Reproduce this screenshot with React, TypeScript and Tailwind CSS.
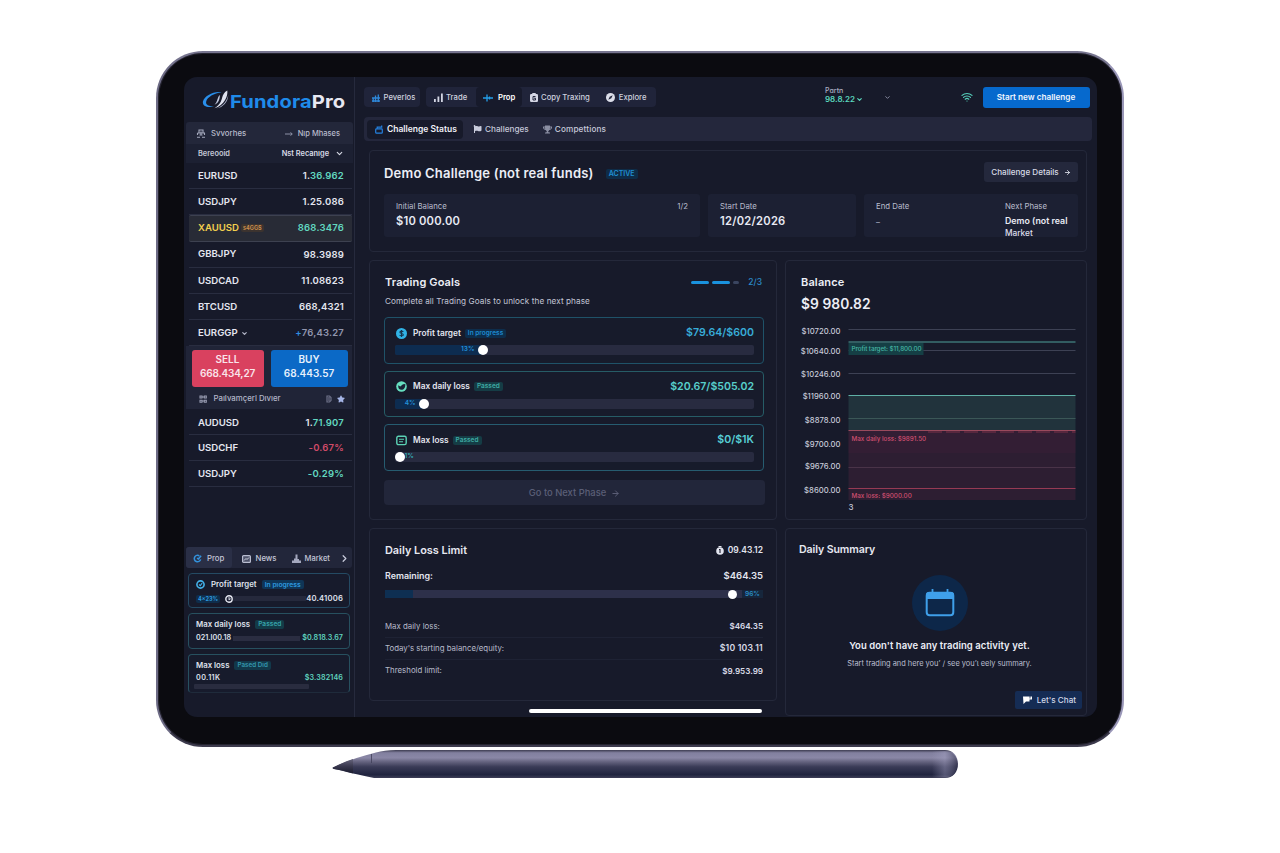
import React from "react";
import { FaFlag, FaTrophy, FaStar } from "react-icons/fa";
import { ChevronDown, ChevronRight, Wifi, ArrowRight } from "lucide-react";

type Tone = "white" | "green" | "red" | "mixed" | "blue" | "gold";

interface Quote {
  symbol: string;
  lead?: string;
  value: string;
  tone: Tone;
}

const toneClass: Record<Tone, string> = {
  white: "text-[#e4e6f0]",
  green: "text-[#62d8c0]",
  red: "text-[#d04a68]",
  mixed: "text-[#62d8c0]",
  blue: "text-[#9296ae]",
  gold: "text-[#62d8c0]",
};

const quotesTop: Quote[] = [
  { symbol: "EURUSD", lead: "1.", value: "36.962", tone: "mixed" },
  { symbol: "USDJPY", value: "1.25.086", tone: "white" },
  { symbol: "XAUUSD", value: "868.3476", tone: "gold" },
  { symbol: "GBBJPY", value: "98.3989", tone: "white" },
  { symbol: "USDCAD", value: "11.08623", tone: "white" },
  { symbol: "BTCUSD", value: "668,4321", tone: "white" },
  { symbol: "EURGGP", lead: "+", value: "76,43.27", tone: "blue" },
];

const quotesBottom: Quote[] = [
  { symbol: "AUDUSD", lead: "1.", value: "71.907", tone: "mixed" },
  { symbol: "USDCHF", value: "-0.67%", tone: "red" },
  { symbol: "USDJPY", value: "-0.29%", tone: "green" },
];

function QuoteRow({ q, compact = false }: { q: Quote; compact?: boolean }) {
  const gold = q.tone === "gold";
  return (
    <div
      className={
        gold
          ? "flex h-[26.2px] items-center justify-between rounded-[2px] border-y border-[#3d4150] bg-[#282b36] pr-[8px] pl-[9px]"
          : compact
            ? "flex h-[25.8px] items-center justify-between border-b border-[#292d40] pt-[2px] pr-[8px] pl-[9px]"
            : "flex h-[26.2px] items-center justify-between border-b border-[#292d40] pt-[1px] pr-[8px] pl-[9px]"
      }
    >
      <div className="flex items-center">
        <span className={gold ? "text-[9.6px] font-semibold text-[#f3cf4e]" : "text-[9.6px] font-semibold text-[#e4e6f0]"}>
          {q.symbol}
        </span>
        {gold && (
          <span className="ml-[2px] rounded-[2px] bg-[#3c332f] px-[2px] text-[5.5px] leading-[8px] font-bold text-[#c98d4c]">s4GGS</span>
        )}
        {q.symbol === "EURGGP" && <ChevronDown className="ml-[3px] h-[7px] w-[7px] text-[#b4b7c9]" strokeWidth={4} />}
      </div>
      <span className={"text-[9.5px] font-semibold tracking-[0.2px] " + toneClass[q.tone]}>
        {q.lead && <span className={q.lead === "+" ? "text-[#2f8de0]" : "text-[#e4e6f0]"}>{q.lead}</span>}
        {q.value}
      </span>
    </div>
  );
}

function Logo() {
  return (
    <div className="flex h-[45px] items-center pt-[3px] pl-[18px]">
      <svg className="-mt-[2px] h-[20px] w-[27px] shrink-0" viewBox="0 0 27 20">
        <path
          d="M19.500 2.300C12 .9 2.200 5.800.9 11.800.2 16.500 6.500 18.300 12 16.300 7 16.300 3.300 14.800 4.200 11.400 5.300 7.200 12 3.300 19.500 2.300Z"
          fill="#2a8fea"
        />
        <path d="M25.300.5c.8 5.500-2.800 14.900-12.800 17.800 5.200-3.500 6.600-6.700 7.600-10.600C20.900 4.700 22.500 2 25.300.5Z" fill="#dfe2ef" />
        <path d="M26.200 4.800c-.7 5-4.500 11-11.200 13.700 5.500-1 11.500-6.500 11.200-13.700Z" fill="#aab0c8" />
        <path d="M17.800 5c-2.300 1.800-2.100 6.500-5.300 9.800 3.800-1.600 5.500-5.500 5.300-9.800Z" fill="#c3cadf" />
      </svg>
      <span className="ml-[1px] inline-block origin-left scale-x-[1.120] text-[18px] font-bold tracking-[0.1px] text-[#e7e8f2]">
        <span className="text-[#1f8bea]">Fundora</span>Pro
      </span>
    </div>
  );
}

function SideTabs() {
  return (
    <div className="mx-[2px] flex h-[21px] shrink-0 items-center rounded-[3px] bg-[#22263a] pt-[2px] text-[7.8px] font-medium text-[#c4c7d8]">
      <div className="-mt-[2px] flex h-[21px] w-[46px] items-center rounded-[3px] bg-[#2a2f46] pt-[2px] pl-[7px]">
        <svg className="h-[9px] w-[9px]" viewBox="0 0 10 10" fill="none" stroke="#3392dc" strokeWidth="1.700">
          <path d="M8.500 6A3.600 3.600 0 1 1 7 2M4.500 4.500 6 5.500l3-3.500" />
        </svg>
        <span className="ml-[5px]">Prop</span>
      </div>
      <svg className="ml-[10px] h-[8px] w-[9px]" viewBox="0 0 9 8">
        <rect x=".6" y=".6" width="7.800" height="6.800" rx="1" fill="#4e536a" stroke="#b9bdd0" strokeWidth="1.200" />
        <path d="M2 5.500 4 3.500l1 1 2-2" stroke="#dfe2ee" fill="none" strokeWidth=".9" />
      </svg>
      <span className="ml-[4.500px]">News</span>
      <svg className="ml-[15px] h-[9px] w-[9px]" viewBox="0 0 9 9" fill="#a4a8be">
        <path d="M0 9V6.500h2V4.500h1.500V.5h2V5H7v1.500h2V9Z" />
      </svg>
      <span className="ml-[4px] text-[7.600px]">Market</span>
      <ChevronRight className="ml-auto mr-[2px] h-[11px] w-[11px] text-[#c9ccdc]" strokeWidth={2.600} />
    </div>
  );
}

function Sidebar() {
  return (
    <aside className="flex w-[171px] shrink-0 flex-col border-r border-[#262a3d]">
      <Logo />
      <div className="mr-[1px] ml-[2px] flex h-[22px] shrink-0 items-center rounded-t-[3px] bg-[#23273a] pt-px text-[7.800px] font-medium text-[#b9bccd]">
        <svg className="ml-[10px] h-[9px] w-[10px]" viewBox="0 0 10 9" fill="none" stroke="#a5a9bd" strokeWidth="1.100">
          <path d="M3 4V1h4v3M1.500 4h7v2M1.500 4v2M3.500 6h3M1 8.300h3M6 8.300h3M5 2.500v3" />
        </svg>
        <span className="ml-[5px]">Svvorhes</span>
        <svg className="ml-auto h-[4px] w-[8px]" viewBox="0 0 8 4" fill="none" stroke="#8d91a6" strokeWidth="1">
          <path d="M0 2h7M5.500.5 7.300 2 5.500 3.500" />
        </svg>
        <span className="mr-[13px] ml-[5px] text-[7.500px]">Nıp Mhases</span>
      </div>
      <div className="mr-[1px] ml-[2px] flex h-[19px] shrink-0 items-center justify-between bg-[#1c2032] pr-[9px] pl-[12px] text-[7.400px] font-semibold text-[#c3c6d6]">
        <span>Bereooid</span>
        <span className="flex items-center text-[#d8dae6]">
          Nst Recanıge
          <ChevronDown className="ml-[6px] h-[9px] w-[9px]" strokeWidth={3} />
        </span>
      </div>
      <div className="mr-[2px] ml-[5px] flex flex-col">
        {quotesTop.map((q, i) => (
          <QuoteRow key={i} q={q} />
        ))}
      </div>
      <div className="mx-[2px] flex h-[63px] shrink-0 flex-col bg-[#202437] pt-[3.500px] pr-[4px] pl-[5.500px]">
        <div className="flex gap-[7px]">
          <div className="flex h-[37px] w-[72px] flex-col items-center justify-center gap-[3px] rounded-[3px] bg-[#d9415f] pb-[3px] text-[10px] leading-[11px] font-semibold text-[#f9e4ea]">
            <span>SELL</span>
            <span className="tracking-[-0.15px]">668.434,27</span>
          </div>
          <div className="flex h-[37px] w-[77px] flex-col items-center justify-center gap-[3px] rounded-[3px] bg-[#0b69c6] pb-[3px] text-[10px] leading-[11px] font-semibold text-[#e6f0fc]">
            <span>BUY</span>
            <span>68.443.57</span>
          </div>
        </div>
        <div className="flex h-[23px] items-center pt-[2px] text-[7.800px] font-medium text-[#b4b7ca]">
          <svg className="ml-[7px] h-[8px] w-[8px]" viewBox="0 0 8 8" fill="none" stroke="#989cb2" strokeWidth="1.100">
            <path d="M1 1h2v2H1zM5.300 1h2v2h-2zM1 5.200h2v2H1zM5.300 5.200h2v2h-2zM3 2h2M3 6h2" />
          </svg>
          <span className="ml-[7px]">Paılvamçerl Dıvıer</span>
          <svg className="ml-auto h-[8px] w-[6px]" viewBox="0 0 6 8" fill="none" stroke="#6d7188" strokeWidth="1.200">
            <path d="M1 1h2.500L5 2.500v3L3.500 7H1zM3 2v4" />
          </svg>
          <FaStar className="mr-[3px] ml-[5px] h-[8px] w-[8px] text-[#a5b5e6]" />
        </div>
      </div>
      <div className="mr-[2px] ml-[5px] flex flex-col">
        {quotesBottom.map((q, i) => (
          <QuoteRow key={i} q={q} compact />
        ))}
      </div>
      <div className="flex-1" />
      <SideTabs />
      <div className="flex h-[149px] shrink-0 flex-col gap-[5px] pt-[5px] pr-[4px] pl-[4px] text-[7.800px] font-semibold text-[#dfe1ec]">
        <div className="flex h-[35px] flex-col rounded-[4px] border border-[#244a63] bg-[#171b2c] px-[7px] pt-[4px]">
          <div className="flex h-[12px] items-center pt-px">
            <svg className="h-[9px] w-[9px]" viewBox="0 0 9 9" fill="none" stroke="#43b2ea" strokeWidth="1.600">
              <circle cx="4.500" cy="4.500" r="3.600" />
              <path d="M3 4.500 4.300 5.600 6.200 3" strokeWidth="1.100" />
            </svg>
            <span className="ml-[6px] tracking-[0.05px]">Profit target</span>
            <span className="ml-[5px] rounded-[2px] bg-[#0f3557] px-[3px] text-[6.800px] leading-[9px] text-[#2d98de]">In pıogress</span>
          </div>
          <div className="flex h-[19px] items-center">
            <span className="rounded-[2px] bg-[#0f2d4b] px-[2px] text-[5.500px] leading-[8px] font-bold text-[#2d98de]">4x23%</span>
            <svg className="ml-[5px] h-[8px] w-[8px]" viewBox="0 0 8 8">
              <circle cx="4" cy="4" r="3.200" fill="#22263a" stroke="#e6e8f1" strokeWidth="1.400" />
              <path d="M3 3h2v1.500H3.500" fill="none" stroke="#e6e8f1" strokeWidth=".8" />
            </svg>
            <span className="h-[5px] flex-1 bg-[#25293c]" />
            <span className="-mr-[1px] text-[7.700px] tracking-[0.15px]">40.41006</span>
          </div>
        </div>
        <div className="flex h-[36px] flex-col rounded-[4px] border border-[#27505f] bg-[#171b2c] px-[7px] pt-[4px]">
          <div className="flex h-[12px] items-center pt-px">
            <span className="tracking-[0.05px]">Max daily loss</span>
            <span className="ml-[5px] rounded-[2px] bg-[#133b48] px-[3px] text-[6.600px] leading-[9px] text-[#36a2a8]">Passed</span>
          </div>
          <div className="flex h-[16px] items-center">
            <span className="text-[7.200px]">021.I00.18</span>
            <span className="ml-[2px] h-[5px] flex-1 bg-[#2a2d41]" />
            <span className="-mr-[1px] ml-[2px] text-[7.200px] text-[#5fd3bf]">$0.818.3.67</span>
          </div>
        </div>
        <div className="flex h-[39px] flex-col rounded-[4px] border border-b-[#1f2b3b] border-[#27505f] bg-[#171b2c] px-[7px] pt-[4px]">
          <div className="flex h-[13px] items-center">
            <span>Max loss</span>
            <span className="ml-[5px] rounded-[2px] bg-[#12384a] px-[3px] text-[6.300px] leading-[9px] text-[#3495ac]">Pased Dıd</span>
          </div>
          <div className="flex h-[12px] items-center justify-between">
            <span className="text-[7.200px] tracking-[0.4px]">00.11K</span>
            <span className="-mr-[1px] text-[7.200px] tracking-[0.1px] text-[#5fd3bf]">$3.382146</span>
          </div>
          <div className="-ml-[2px] h-[5px] w-[115px] shrink-0 rounded-[1px] bg-[#292c3f]" />
        </div>
      </div>
    </aside>
  );
}

function TopNav() {
  return (
    <div className="flex h-[40px] items-center pl-[9px] text-[7.700px] font-medium text-[#ced1df]">
      <div className="flex h-[20px] w-[56px] items-center rounded-[4px] bg-[#20243a] pt-px pl-[8px]">
        <svg className="h-[8px] w-[8px]" viewBox="0 0 8 8" fill="none" stroke="#2e87d8" strokeWidth="1.300">
          <path d="M1.200 8V4M3.500 8V1.500M6.300 8V.5M0 4h8M0 7h8" />
        </svg>
        <span className="ml-[3.500px]">Peverlos</span>
      </div>
      <div className="ml-[6px] flex h-[20px] w-[230px] items-center rounded-[4px] bg-[#20243a] pt-px">
        <div className="flex w-[50px] items-center pl-[7.500px]">
          <svg className="h-[9px] w-[9px]" viewBox="0 0 9 9" fill="#d4d6e4">
            <path d="M0 6h1.800v3H0zM3.500 3.500h1.800V9H3.500zM7 .5h1.800V9H7z" />
          </svg>
          <span className="ml-[3.500px]">Trade</span>
        </div>
        <div className="-mt-px flex h-[20px] w-[46px] items-center rounded-[4px] bg-[#171a2b] pt-px pl-[7px] font-semibold text-white">
          <svg className="h-[8px] w-[10px]" viewBox="0 0 10 8" fill="none" stroke="#249ee8" strokeWidth="1.300">
            <path d="M0 4h10M4 .5v7M6.500 2.500v3" />
          </svg>
          <span className="ml-[5px]">Prop</span>
        </div>
        <svg className="-mt-px ml-[8px] h-[9px] w-[8px]" viewBox="0 0 8 9">
          <rect x="0" y="1" width="8" height="8" rx="1.300" fill="#d4d6e4" />
          <rect x="2.200" y="0" width="3.600" height="2" rx=".6" fill="#d4d6e4" />
          <path d="M5.500 3.500H3v3.500h2.500V5.200H4" stroke="#23273c" fill="none" strokeWidth="1" />
        </svg>
        <span className="ml-[3px]">Copy Traxing</span>
        <svg className="-mt-px ml-[16px] h-[9px] w-[9px]" viewBox="0 0 9 9">
          <circle cx="4.500" cy="4.500" r="4.500" fill="#dcdee9" />
          <path d="M6.700 2.300 5.300 5.300 2.300 6.700 3.700 3.700Z" fill="#23273c" />
        </svg>
        <span className="ml-[4px]">Explore</span>
      </div>
      <div className="ml-[169px] flex w-[46px] flex-col pb-[5px] leading-[9px]">
        <span className="text-[7px] text-[#aeb1c4]">Pɑrtn</span>
        <span className="flex items-center text-[8px] font-semibold text-[#5ad6bd]">
          98.8.22
          <ChevronDown className="ml-[1px] h-[7px] w-[7px]" strokeWidth={4} />
        </span>
      </div>
      <ChevronDown className="ml-[13px] h-[7px] w-[7px] text-[#9296ab]" strokeWidth={3} />
      <Wifi className="ml-[70px] h-[12px] w-[12px] text-[#54cdb9]" strokeWidth={2.400} />
      <div className="ml-[9.500px] flex h-[21px] w-[107px] items-center justify-center rounded-[3px] bg-[#0669cd] text-[8.200px] font-semibold text-[#f0f5fd]">
        Start new challenge
      </div>
    </div>
  );
}

function SubNav() {
  return (
    <div className="mr-[5px] ml-[9px] flex h-[24px] items-center rounded-[4px] bg-[#24273c] text-[8.200px] font-medium text-[#c6c9d9]">
      <div className="ml-[3px] flex h-[19px] w-[96px] items-center rounded-[4px] bg-[#171a2a] pl-[8px] text-[8.500px] font-semibold text-[#f0f1f7]">
        <svg className="h-[9px] w-[8px]" viewBox="0 0 8 9" fill="none" stroke="#2481e0" strokeWidth="1.200">
          <rect x=".7" y="3.900" width="6.600" height="4.300" rx=".8" />
          <path d="M2.200 3.800V2.200h4.500V.6" />
        </svg>
        <span className="ml-[4px]">Challenge Status</span>
      </div>
      <FaFlag className="ml-[10px] h-[8px] w-[9px] text-[#c9ccdc]" />
      <span className="ml-[3px]">Challenges</span>
      <FaTrophy className="ml-[14px] h-[9px] w-[9px] text-[#8b8fa3]" />
      <span className="ml-[3px] tracking-[0.15px]">Compettions</span>
    </div>
  );
}

function HeaderCard() {
  return (
    <section className="flex h-[102px] flex-col rounded-[4px] border border-[#24283a] pt-[11px] pr-[8px] pl-[14px]">
      <div className="flex h-[20px] items-center">
        <h1 className="pt-[4px] text-[13px] font-semibold tracking-[0.21px] text-[#eceef6]">Demo Challenge (not real funds)</h1>
        <span className="mt-[4px] ml-[12px] rounded-[2px] bg-[#0e2c48] px-[3px] text-[7px] leading-[10px] font-semibold text-[#2090d2]">ACTIVE</span>
        <div className="ml-auto flex h-[20px] w-[94px] items-center justify-center gap-[5px] rounded-[3px] bg-[#24283c] text-[8.100px] font-medium text-[#d9dbe7]">
          Challenge Details
          <ArrowRight className="h-[7px] w-[7px]" strokeWidth={3} />
        </div>
      </div>
      <div className="mt-[12px] flex h-[43px] gap-[8px] text-[7.800px] leading-[11px] text-[#b9bccd]">
        <div className="flex w-[316px] justify-between rounded-[3px] bg-[#1c2033] px-[12px] pt-[7px]">
          <div className="flex flex-col gap-[3px]">
            <span>Initial Balance</span>
            <span className="text-[11.200px] leading-[13px] font-semibold tracking-[0.2px] text-[#e8eaf3]">$10 000.00</span>
          </div>
          <span>1/2</span>
        </div>
        <div className="flex w-[148px] flex-col gap-[3px] rounded-[3px] bg-[#1c2033] pt-[7px] pl-[12px]">
          <span>Start Date</span>
          <span className="text-[11.200px] leading-[13px] font-semibold tracking-[0.25px] text-[#e8eaf3]">12/02/2026</span>
        </div>
        <div className="flex flex-1 justify-between rounded-[3px] bg-[#1c2033] pt-[7px] pr-[9px] pl-[12px]">
          <div className="flex flex-col gap-[3px]">
            <span>End Date</span>
            <span className="pt-[2px]">–</span>
          </div>
          <div className="flex w-[64px] flex-col whitespace-nowrap">
            <span>Next Phase</span>
            <span className="pt-[2px] text-[8.800px] leading-[13px] font-semibold text-[#e8eaf3]">Demo (not real</span>
            <span className="text-[8.300px] leading-[12px] font-medium text-[#dcdeea]">Market</span>
          </div>
        </div>
      </div>
    </section>
  );
}

interface Goal {
  title: string;
  badge: string;
  badgeClass: string;
  amount: string;
  amountClass: string;
  percent: string;
  fill: number;
  border: string;
  icon: React.ReactNode;
}

const goals: Goal[] = [
  {
    title: "Profit target",
    badge: "In progress",
    badgeClass: "bg-[#0d2d4c] text-[#1d8bd0]",
    amount: "$79.64/$600",
    amountClass: "text-[#38acd8]",
    percent: "13%",
    fill: 88,
    border: "border-[#1f5268]",
    icon: (
      <svg className="h-[11px] w-[11px]" viewBox="0 0 11 11">
        <circle cx="5.500" cy="5.500" r="5.500" fill="#31b3e6" />
        <path d="M7.300 3.800c-.8-1-3.400-.9-3.400.4 0 1.600 3.400.9 3.400 2.500 0 1.400-2.800 1.500-3.700.3M5.500 2v7" stroke="#16354e" strokeWidth="1.100" fill="none" />
      </svg>
    ),
  },
  {
    title: "Max daily loss",
    badge: "Passed",
    badgeClass: "bg-[#153c45] text-[#3eaaa3]",
    amount: "$20.67/$505.02",
    amountClass: "text-[#57cfcb]",
    percent: "4%",
    fill: 29,
    border: "border-[#265c66]",
    icon: (
      <svg className="h-[11px] w-[11px]" viewBox="0 0 11 11">
        <circle cx="5.500" cy="5.500" r="5.300" fill="#66dfc0" />
        <path d="M2.200 4.300 4.300 5.500 7 3.300 9.300 3c.3 3.800-1.500 5.800-3.800 5.800S2 7.500 2.200 4.300Z" fill="#192436" />
      </svg>
    ),
  },
  {
    title: "Max loss",
    badge: "Passed",
    badgeClass: "bg-[#153c45] text-[#3eaaa3]",
    amount: "$0/$1K",
    amountClass: "text-[#57cfd6]",
    percent: "1%",
    fill: 5,
    border: "border-[#265c70]",
    icon: (
      <svg className="h-[11px] w-[11px]" viewBox="0 0 11 11" fill="none" stroke="#5bd2b5" strokeWidth="1.400">
        <rect x=".8" y="1.300" width="9.400" height="8.300" rx="1.600" />
        <path d="M3 4.300h5M3 6.700h4" strokeWidth="1.100" />
      </svg>
    ),
  },
];

function GoalCard({ g }: { g: Goal }) {
  const atStart = g.fill <= 10;
  return (
    <div className={"flex h-[46.500px] flex-col rounded-[4px] border bg-[#171b2b] pr-[9px] pl-[9.500px] " + g.border}>
      <div className="flex h-[30px] shrink-0 items-center">
        <span className="ml-[1.500px]">{g.icon}</span>
        <span className="ml-[6px] text-[8.300px] font-semibold text-[#e3e5ef]">{g.title}</span>
        <span className={"ml-[4px] rounded-[2px] px-[3px] text-[6.500px] leading-[9px] font-semibold " + g.badgeClass}>{g.badge}</span>
        <span className={"ml-auto text-[10.600px] font-semibold " + g.amountClass}>{g.amount}</span>
      </div>
      <div className="-mt-[3px] flex h-[10px] shrink-0 items-center rounded-[2px] bg-[#282b40]">
        <div
          className={
            atStart
              ? "h-[10px] shrink-0"
              : "flex h-[10px] shrink-0 items-center justify-end rounded-l-[2px] bg-[#0d2c50] pr-[8px] text-[6.500px] font-semibold text-[#2390d8]"
          }
          style={{ width: g.fill }}
        >
          {!atStart && g.percent}
        </div>
        <div className="-mx-[5px] h-[10px] w-[10px] shrink-0 rounded-full bg-white" />
        {atStart && <span className="ml-[5px] text-[6.500px] font-semibold text-[#35adb8]">{g.percent}</span>}
      </div>
    </div>
  );
}

function TradingGoals() {
  return (
    <section className="flex h-[260px] w-[408px] flex-col rounded-[4px] border border-[#24283a] pr-[12px] pl-[14px]">
      <div className="flex h-[26px] items-end pl-[1px]">
        <h2 className="flex-1 text-[11px] leading-[9px] font-semibold tracking-[0.12px] text-[#eceef6]">Trading Goals</h2>
        <div className="flex items-center gap-[3px] pr-[2px] text-[8.500px] leading-[9px] font-medium text-[#2b8bc9]">
          <span className="h-[3px] w-[18px] rounded-full bg-[#1a92de]" />
          <span className="h-[3px] w-[18px] rounded-full bg-[#1a92de]" />
          <span className="h-[3px] w-[6px] rounded-full bg-[#3a4560]" />
          <span className="ml-[6px]">2/3</span>
        </div>
      </div>
      <p className="mt-[8px] pl-[1px] text-[8.200px] leading-[12px] tracking-[0.07px] text-[#c2c5d5]">
        Complete all Trading Goals to unlock the next phase
      </p>
      <div className="mt-[10px] flex flex-col gap-[7px]">
        {goals.map((g) => (
          <GoalCard key={g.title} g={g} />
        ))}
      </div>
      <div className="mt-[9.500px] -mr-[1px] flex h-[25px] shrink-0 items-center justify-center gap-[5px] rounded-[4px] bg-[#22263a] pt-px text-[9.400px] font-medium text-[#5b5f77]">
        Go to Next Phase
        <ArrowRight className="h-[9px] w-[9px]" strokeWidth={2.600} />
      </div>
    </section>
  );
}

const axisLabels = [
  { y: 4.500, text: "$10720.00" },
  { y: 25, text: "$10640.00" },
  { y: 47.500, text: "$10246.00" },
  { y: 70, text: "$11960.00" },
  { y: 94, text: "$8878.00" },
  { y: 117.500, text: "$9700.00" },
  { y: 139.500, text: "$9676.00" },
  { y: 164, text: "$8600.00" },
];

function BalanceChart() {
  return (
    <svg
      className="ml-[12px] h-[192px] w-[280px] shrink-0"
      viewBox="0 0 280 192"
      fontFamily='Inter, "Liberation Sans", sans-serif'
    >
      {axisLabels.map((l) => (
        <text key={l.text} x="42.500" y={l.y + 3} textAnchor="end" fontSize="7.700" fontWeight="500" fill="#c6c9d8">
          {l.text}
        </text>
      ))}
      <path d="M50.500 3.500h227M50.500 24.500h227M50.500 47.500h227" stroke="#3d4154" />
      <path d="M50.500 16h227" stroke="#4f9f99" />
      <rect x="50.500" y="17" width="75" height="12" fill="#153f45" />
      <text x="53.500" y="25.300" fontSize="6.300" fontWeight="500" fill="#45b5a4" textLength="70">Profit target: $11,800.00</text>
      <rect x="50.500" y="70" width="227" height="35" fill="#21333c" />
      <path d="M50.500 69.500h227" stroke="#5fb0a6" />
      <path d="M50.500 92.500h227" stroke="#3b5757" />
      <rect x="50.500" y="105" width="227" height="69" fill="#2d1e32" />
      <rect x="50.500" y="105" width="227" height="22" fill="#3a1e35" opacity=".5" />
      <path d="M50.500 104.500h227" stroke="#9a4a5d" />
      <path d="M130 106h147.500" stroke="#7c3048" strokeDasharray="14 4" />
      <path d="M50.500 141.500h227" stroke="#493348" />
      <path d="M50.500 162.500h227" stroke="#963a54" />
      <text x="53.500" y="114.500" fontSize="6.300" fontWeight="500" fill="#cf4e70">Max daily loss: $9891.50</text>
      <text x="53.500" y="171.500" fontSize="6.300" fontWeight="500" fill="#cf4e70">Max loss: $9000.00</text>
      <text x="50.500" y="183.700" fontSize="8" fontWeight="500" fill="#c6c9d8">3</text>
    </svg>
  );
}

function Balance() {
  return (
    <section className="flex h-[260px] w-[302px] flex-col rounded-[4px] border border-[#24283a]">
      <h2 className="mt-[15px] pl-[15px] text-[11px] leading-[13px] font-semibold tracking-[0.15px] text-[#eceef6]">Balance</h2>
      <p className="mt-[6px] mb-[12px] pl-[15px] text-[13.800px] leading-[19px] font-semibold tracking-[0.05px] text-[#eceef6]">$9 980.82</p>
      <BalanceChart />
    </section>
  );
}

const limits = [
  { label: "Max daily loss:", value: "$464.35" },
  { label: "Today's starting balance/equity:", value: "$10 103.11" },
  { label: "Threshold limit:", value: "$9.953.99" },
];

function DailyLoss() {
  return (
    <section className="flex h-[173px] w-[408px] flex-col rounded-[4px] border border-[#24283a] pr-[13px] pl-[15px]">
      <div className="mt-[14px] flex h-[14px] items-center">
        <h2 className="flex-1 text-[10.900px] font-semibold text-[#e6e8f1]">Daily Loss Limit</h2>
        <svg className="h-[9px] w-[8px]" viewBox="0 0 8 9">
          <circle cx="4" cy="5" r="3.800" fill="#e3e5ef" />
          <path d="M2.500.5h3" stroke="#e3e5ef" strokeWidth="1" />
          <path d="M4 3v4M3 3.500h1.500" stroke="#1a1d2e" strokeWidth="1.100" fill="none" />
        </svg>
        <span className="ml-[4px] text-[8.500px] font-semibold text-[#e3e5ef]">09.43.12</span>
      </div>
      <div className="mt-[13px] flex h-[12px] items-center justify-between text-[8.900px] font-semibold text-[#e3e5ef]">
        <span>Remaining:</span>
        <span className="text-[9.500px]">$464.35</span>
      </div>
      <div className="mt-[8px] flex h-[8px] items-center bg-[#2d304a]">
        <div className="h-[8px] w-[28px] bg-[#0e2f52]" />
        <div className="ml-auto h-[9px] w-[9px] rounded-full bg-white" />
        <div className="ml-[5px] h-[8px] w-[21px] bg-[#16263c] pl-[3px] text-[6.500px] leading-[8px] font-semibold text-[#2a8cc4]">96%</div>
      </div>
      <div className="mt-[18px] flex flex-col text-[7.850px] text-[#b7bacb]">
        {limits.map((l, i) => (
          <div
            key={l.label}
            className={
              i < 2
                ? "flex h-[22px] items-center justify-between border-b border-[#1e2234]"
                : "flex h-[22px] items-center justify-between"
            }
          >
            <span>{l.label}</span>
            <span className={i === 1 ? "text-[8.700px] font-semibold tracking-[0.2px] text-[#d9dbe7]" : "text-[8.100px] font-semibold text-[#d9dbe7]"}>
              {l.value}
            </span>
          </div>
        ))}
      </div>
    </section>
  );
}

function DailySummary() {
  return (
    <section className="flex h-[188px] w-[302px] flex-col items-center rounded-[4px] border border-[#24283a]">
      <h2 className="mt-[14px] self-start pl-[13px] text-[10.600px] leading-[14px] font-semibold tracking-[-0.1px] text-[#e6e8f1]">Daily Summary</h2>
      <div className="mt-[18px] ml-[7px] flex h-[56px] w-[56px] shrink-0 items-center justify-center rounded-full bg-[#0d2749]">
        <svg className="h-[28px] w-[30px]" viewBox="0 0 30 28">
          <path d="M7.500 0v4M22.500 0v4" stroke="#3fa0ea" strokeWidth="1.800" />
          <rect x="1.700" y="3.700" width="26.600" height="22.600" rx="3" fill="none" stroke="#3fa0ea" strokeWidth="2" />
          <path d="M1 6a3 3 0 0 1 3-3h22a3 3 0 0 1 3 3v4H1Z" fill="#3fa0ea" />
        </svg>
      </div>
      <p className="mt-[8px] ml-[7px] text-[9.500px] leading-[14px] font-semibold tracking-[0.05px] text-[#eceef6]">
        You don't have any trading activity yet.
      </p>
      <p className="mt-[5px] ml-[7px] text-[7.450px] leading-[12px] tracking-[-0.02px] text-[#bcbfd0]">Start trading and here you’ / see you’ɩ eely summary.</p>
      <div className="mt-[21px] mr-[4px] flex h-[18px] shrink-0 items-center self-end rounded-[2px] bg-[#152c54] pr-[6px] pl-[8px] text-[8.100px] font-medium text-[#d3d8e9]">
        <svg className="mr-[5px] h-[8px] w-[9px]" viewBox="0 0 9 8" fill="#ffffff">
          <path d="M0 .5h9v3H6.500v2H3L.5 8Z" />
          <path d="M7 0v2.500" stroke="#152c54" strokeWidth=".8" />
        </svg>
        Let's Chat
      </div>
    </section>
  );
}

function Pencil() {
  return (
    <svg className="ml-[332px] h-[30px] w-[628px]" viewBox="0 0 628 30">
      <defs>
        <linearGradient id="barrel" x1="0" y1="0" x2="0" y2="1">
          <stop offset="0" stopColor="#3c3b50" />
          <stop offset=".1" stopColor="#82809f" />
          <stop offset=".28" stopColor="#8a87a6" />
          <stop offset=".42" stopColor="#65637f" />
          <stop offset=".6" stopColor="#3a3b57" />
          <stop offset=".88" stopColor="#20243f" />
          <stop offset="1" stopColor="#3d3e57" />
        </linearGradient>
        <linearGradient id="tip" x1="0" y1="0" x2="0" y2="1">
          <stop offset="0" stopColor="#66647c" />
          <stop offset=".5" stopColor="#3a394f" />
          <stop offset="1" stopColor="#1b1c2e" />
        </linearGradient>
        <linearGradient id="cap" x1="0" y1="0" x2="1" y2="0">
          <stop offset="0" stopColor="#a5a3c4" stopOpacity="0" />
          <stop offset=".5" stopColor="#a5a3c4" stopOpacity=".4" />
          <stop offset="1" stopColor="#2c2d45" stopOpacity=".6" />
        </linearGradient>
      </defs>
      <path d="M1 17.500C12 12 26 7 44 2.500 50 1 56 0 64 0H613c8 0 13 6 13 14s-5 14-13 14H42C26 25 12 21 2 19c-1.300-.4-1.800-.9-1-1.500Z" fill="url(#barrel)" />
      <path d="M1 17.500C8 14 14 11.300 21 9v14.200C14 21.500 8 20 2 19c-1.300-.4-1.800-.9-1-1.500Z" fill="url(#tip)" />
      <path d="M39.500 4v9" stroke="#3f3f58" strokeWidth=".8" fill="none" />
      <path d="M600 1h13c8 0 12.500 6 12.500 13S621 27.500 613 27.500h-13Z" fill="url(#cap)" />
    </svg>
  );
}

export default function App() {
  return (
    <div
      className="flex h-[853px] w-[1280px] flex-col overflow-hidden bg-white pt-[51px] [&_*]:whitespace-nowrap"
      style={{ fontFamily: 'Inter, "Liberation Sans", sans-serif' }}
    >
      <div className="relative ml-[156px] h-[696px] w-[968px] shrink-0 rounded-[47px] border-[2px] border-t-[#77758f] border-r-[#9a97b8] border-b-[#3c3a4c] border-l-[#6d6b85] bg-[#0b0b10] pt-[24px] pl-[26px] shadow-[inset_0_0_0_1px_#24232f]">
        <div className="flex h-[640px] w-[913px] overflow-hidden rounded-[13px] bg-[#171a2a]">
          <Sidebar />
          <main className="flex w-[742px] flex-col">
            <TopNav />
            <SubNav />
            <div className="flex flex-col gap-[8px] pt-[9px] pl-[14px] pr-[10px]">
              <HeaderCard />
              <div className="flex gap-[8px]">
                <TradingGoals />
                <Balance />
              </div>
              <div className="flex items-start gap-[8px]">
                <DailyLoss />
                <DailySummary />
              </div>
            </div>
          </main>
        </div>
        <div className="absolute top-[656px] left-[371px] h-[4px] w-[233px] rounded-full bg-white" />
      </div>
      <div className="mt-[3px]">
        <Pencil />
      </div>
    </div>
  );
}
